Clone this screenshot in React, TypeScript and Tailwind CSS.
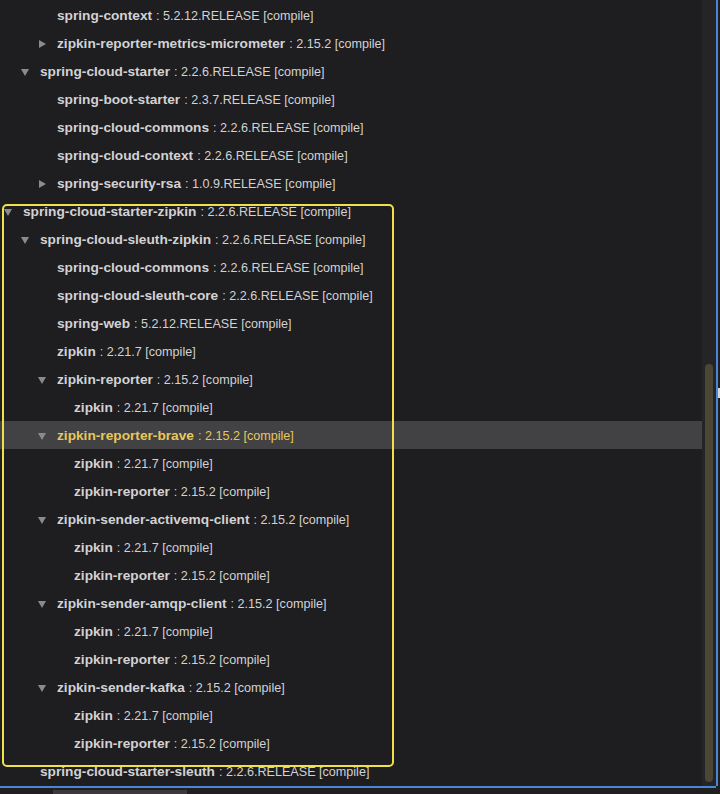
import React from "react";

type Row = { lvl: number; name: string; ver: string; exp?: "open" | "closed"; hl?: boolean };

const rows: Row[] = [
  { lvl: 2, name: "spring-context", ver: "5.2.12.RELEASE" },
  { lvl: 2, name: "zipkin-reporter-metrics-micrometer", ver: "2.15.2", exp: "closed" },
  { lvl: 1, name: "spring-cloud-starter", ver: "2.2.6.RELEASE", exp: "open" },
  { lvl: 2, name: "spring-boot-starter", ver: "2.3.7.RELEASE" },
  { lvl: 2, name: "spring-cloud-commons", ver: "2.2.6.RELEASE" },
  { lvl: 2, name: "spring-cloud-context", ver: "2.2.6.RELEASE" },
  { lvl: 2, name: "spring-security-rsa", ver: "1.0.9.RELEASE", exp: "closed" },
  { lvl: 0, name: "spring-cloud-starter-zipkin", ver: "2.2.6.RELEASE", exp: "open" },
  { lvl: 1, name: "spring-cloud-sleuth-zipkin", ver: "2.2.6.RELEASE", exp: "open" },
  { lvl: 2, name: "spring-cloud-commons", ver: "2.2.6.RELEASE" },
  { lvl: 2, name: "spring-cloud-sleuth-core", ver: "2.2.6.RELEASE" },
  { lvl: 2, name: "spring-web", ver: "5.2.12.RELEASE" },
  { lvl: 2, name: "zipkin", ver: "2.21.7" },
  { lvl: 2, name: "zipkin-reporter", ver: "2.15.2", exp: "open" },
  { lvl: 3, name: "zipkin", ver: "2.21.7" },
  { lvl: 2, name: "zipkin-reporter-brave", ver: "2.15.2", exp: "open", hl: true },
  { lvl: 3, name: "zipkin", ver: "2.21.7" },
  { lvl: 3, name: "zipkin-reporter", ver: "2.15.2" },
  { lvl: 2, name: "zipkin-sender-activemq-client", ver: "2.15.2", exp: "open" },
  { lvl: 3, name: "zipkin", ver: "2.21.7" },
  { lvl: 3, name: "zipkin-reporter", ver: "2.15.2" },
  { lvl: 2, name: "zipkin-sender-amqp-client", ver: "2.15.2", exp: "open" },
  { lvl: 3, name: "zipkin", ver: "2.21.7" },
  { lvl: 3, name: "zipkin-reporter", ver: "2.15.2" },
  { lvl: 2, name: "zipkin-sender-kafka", ver: "2.15.2", exp: "open" },
  { lvl: 3, name: "zipkin", ver: "2.21.7" },
  { lvl: 3, name: "zipkin-reporter", ver: "2.15.2" },
  { lvl: 1, name: "spring-cloud-starter-sleuth", ver: "2.2.6.RELEASE" },
];

const indent = ["pl-[3px]", "pl-[20px]", "pl-[37px]", "pl-[54px]"];

function Tri({ exp }: { exp?: "open" | "closed" }) {
  if (!exp) return <span className="w-[20px] shrink-0" />;
  return (
    <span className="w-[20px] shrink-0 flex items-center">
      {exp === "open" ? (
        <svg width="10" height="8" viewBox="0 0 10 8">
          <path d="M1 1 L9 1 L5 8 Z" fill="#8b8b8d" />
        </svg>
      ) : (
        <svg width="8" height="10" viewBox="0 0 8 10" className="ml-[1px]">
          <path d="M1 1 L8 5 L1 9 Z" fill="#8b8b8d" />
        </svg>
      )}
    </span>
  );
}

export default function App() {
  return (
    <div
      className="w-[720px] h-[794px] bg-[#1e1d20] relative overflow-hidden flex flex-col"
      style={{ fontFamily: '"Liberation Sans", Arial, sans-serif' }}
    >
      <div className="flex h-[786px]">
        <div className="flex-1 pt-[1px] flex flex-col">
          {rows.map((r, i) => (
            <div
              key={i}
              className={`h-[28px] pt-[2px] flex items-center whitespace-nowrap ${indent[r.lvl]} ${
                r.hl ? "bg-[#424144] text-[#e9c75b]" : "text-[#d2d2d4]"
              }`}
            >
              <Tri exp={r.exp} />
              <span className="font-bold text-[13.7px]">{r.name}</span>
              <span className="ml-[4px] text-[12.6px]">: {r.ver} [compile]</span>
            </div>
          ))}
        </div>
        <div className="w-[14px] bg-[#252528] relative flex flex-col">
          <div className="h-[364px]" />
          <div className="mx-[3px] w-[8px] h-[418px] rounded-full bg-[#4c4635]" />
        </div>
        <div className="w-[2px] bg-[#4a86d4]" />
        <div className="w-[2px] flex flex-col">
          <div className="h-[388px]" />
          <div className="h-[10px] bg-[#d8d8d8]" />
        </div>
      </div>
      <div className="h-[2px] w-[716px] bg-[#4a86d4]" />
      <div className="flex-1 bg-[#1f1f21] flex flex-col">
        <div className="h-[2px]" />
        <div className="ml-[53px] w-[134px] h-[4px] bg-[#3a3a3d]" />
      </div>
      <div className="absolute left-[2px] top-[204px] w-[392px] h-[563px] border-2 border-[#f0e04a] rounded-[5px] pointer-events-none" />
    </div>
  );
}
